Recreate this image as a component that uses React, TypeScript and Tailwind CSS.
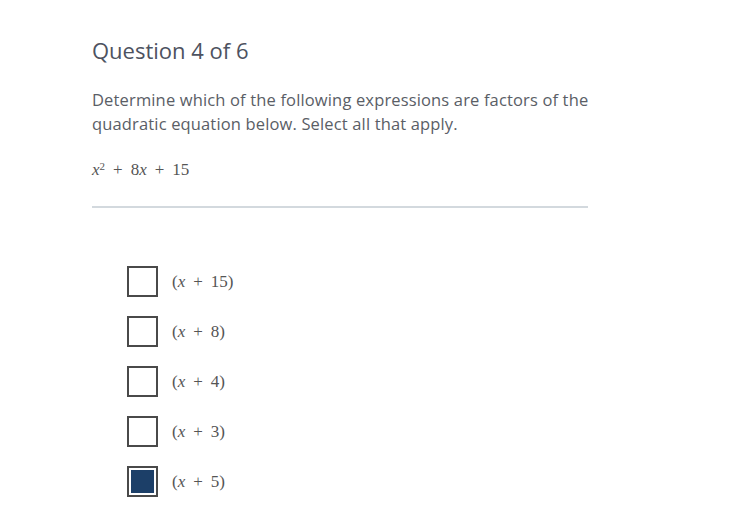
import React, { useState } from 'react';

const options = [
  { id: 'a', value: '15' },
  { id: 'b', value: '8' },
  { id: 'c', value: '4' },
  { id: 'd', value: '3' },
  { id: 'e', value: '5' },
];

function MathX() {
  return <span className="italic">x</span>;
}

export default function App() {
  const [checked, setChecked] = useState<Record<string, boolean>>({ e: true });

  const toggle = (id: string) =>
    setChecked((prev) => ({ ...prev, [id]: !prev[id] }));

  return (
    <div className="min-h-[518px] w-[755px] bg-white font-['Open_Sans','Noto_Sans',sans-serif]">
      <div className="pl-[92px] pr-[160px] pt-[36px]">
        <h1 className="text-[22px] leading-[28px] text-[#4d5260]">Question 4 of 6</h1>

        <p className="mt-[24px] text-[16.5px] leading-[24px] tracking-[0.15px] text-[#5a5e66]">
          Determine which of the following expressions are factors of the quadratic equation below. Select all that apply.
        </p>

        <div className="mt-[22px] font-['Liberation_Serif','DejaVu_Serif',serif] text-[17px] leading-[24px] text-[#555]">
          <MathX />
          <sup className="text-[11px]">2</sup>
          <span className="mx-[8px]">+</span>8<MathX />
          <span className="mx-[8px]">+</span>15
        </div>

        <div className="mt-[24px] h-[2px] w-[496px] bg-[#d3d9de]" />

        <div className="mt-[58px] flex flex-col gap-[19px] pl-[35px]">
          {options.map((o) => (
            <label key={o.id} className="flex h-[31px] cursor-pointer items-center gap-[14px]">
              <button
                type="button"
                onClick={() => toggle(o.id)}
                className="flex h-[31px] w-[31px] items-center justify-center border-2 border-[#4a4a4a] bg-white p-[2px]"
              >
                {checked[o.id] && <span className="h-full w-full bg-[#1c3f68]" />}
              </button>
              <span className="font-['Liberation_Serif','DejaVu_Serif',serif] text-[17px] text-[#555]">
                (<MathX />
                <span className="mx-[8px]">+</span>
                {o.value})
              </span>
            </label>
          ))}
        </div>
      </div>
    </div>
  );
}
